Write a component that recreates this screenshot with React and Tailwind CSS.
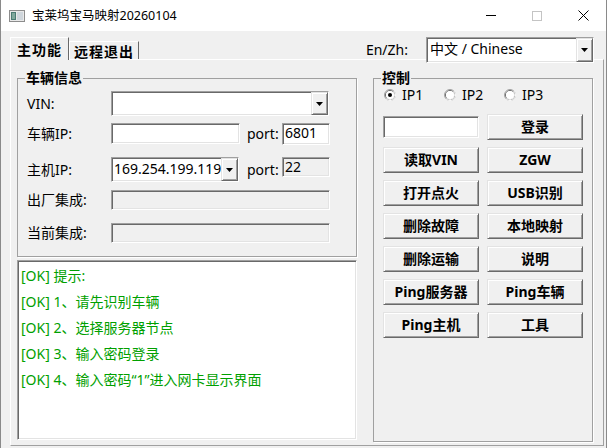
import React from "react";

const SUNKEN =
  "border border-t-[#a0a0a0] border-l-[#a0a0a0] border-r-white border-b-white shadow-[inset_1px_1px_0_#696969,inset_-1px_-1px_0_#e3e3e3]";
const RAISED =
  "border border-t-[#e3e3e3] border-l-[#e3e3e3] border-r-[#696969] border-b-[#696969] shadow-[inset_1px_1px_0_#ffffff,inset_-1px_-1px_0_#a0a0a0]";

function Arrow() {
  return (
    <svg width="7" height="4" viewBox="0 0 7 4">
      <path d="M0 0H7L3.5 4Z" fill="#000" />
    </svg>
  );
}

function DropBtn() {
  return (
    <div className={`${RAISED} bg-[#f0f0f0] w-[17px] shrink-0 flex items-center justify-center`}>
      <Arrow />
    </div>
  );
}

function Radio({ checked, label }) {
  return (
    <div className="flex items-center w-[60px]">
      <svg width="12" height="12" viewBox="0 0 12 12">
        <circle cx="6" cy="6" r="5.5" fill="none" stroke="#a0a0a0" />
        <path d="M9.89 2.11A5.5 5.5 0 0 1 2.11 9.89" fill="none" stroke="#ffffff" />
        <circle cx="6" cy="6" r="4.5" fill="none" stroke="#696969" />
        <path d="M9.18 2.82A4.5 4.5 0 0 1 2.82 9.18" fill="none" stroke="#e3e3e3" />
        <circle cx="6" cy="6" r="4" fill="#ffffff" />
        {checked && <circle cx="6" cy="6" r="2" fill="#000" />}
      </svg>
      <span className="ml-[6px] text-[14px] leading-[18px] text-black">{label}</span>
    </div>
  );
}

function Btn({ children }) {
  return (
    <div
      className={`${RAISED} bg-[#f0f0f0] h-[26px] flex items-center justify-center text-[14px] font-bold leading-[18px] text-black`}
    >
      {children}
    </div>
  );
}

const LOG = [
  "[OK] 提示:",
  "[OK] 1、请先识别车辆",
  "[OK] 2、选择服务器节点",
  "[OK] 3、输入密码登录",
  "[OK] 4、输入密码“1”进入网卡显示界面",
];

export default function App() {
  return (
    <div className="w-[607px] h-[448px] overflow-hidden bg-[#f0f0f0] border-x border-[#8a8a8a] flex flex-col font-['Noto_Sans','Noto_Sans_CJK_SC',sans-serif] text-black">
      {/* Title bar */}
      <div className="h-[31px] bg-white flex items-center shrink-0">
        <svg className="ml-[8px]" width="16" height="12" viewBox="0 0 16 12">
          <rect x="0.5" y="0.5" width="15" height="11" fill="#e9e9e9" stroke="#8c8c8c" />
          <rect x="2" y="2" width="5" height="8" fill="#4a7a72" />
          <rect x="3" y="3" width="3" height="6" fill="#7fa89c" />
          <rect x="8" y="2" width="6" height="8" fill="#cfd6dc" />
        </svg>
        <span className="ml-[7px] text-[12.5px] leading-[16px]">宝莱坞宝马映射20260104</span>
        <div className="ml-auto flex h-full">
          <div className="w-[46px] h-full flex items-center justify-center">
            <div className="w-[10px] h-[1px] bg-black" />
          </div>
          <div className="w-[46px] h-full flex items-center justify-center">
            <div className="w-[10px] h-[10px] border border-[#c4c4c4]" />
          </div>
          <div className="w-[46px] h-full flex items-center justify-center">
            <svg width="11" height="11" viewBox="0 0 11 11">
              <path d="M0.5 0.5L10.5 10.5M10.5 0.5L0.5 10.5" stroke="#000" strokeWidth="1" />
            </svg>
          </div>
        </div>
      </div>

      {/* Tab control */}
      <div className="ml-[9px] mr-[2px] mt-[6px] flex flex-col">
        <div className="h-[22px] flex items-end">
          <div className="relative z-10 h-[23px] w-[59px] -mb-[1px] bg-[#f0f0f0] border-t border-l border-white border-r border-r-[#696969] flex items-center justify-center text-[14px] font-bold tracking-[1px] leading-[18px] font-['Noto_Sans_CJK_SC',sans-serif]">
            主功能
          </div>
          <div className="h-[18px] w-[70px] border-t border-l border-white border-r border-r-[#696969] flex items-center justify-center text-[14px] font-bold tracking-[1px] leading-[18px] font-['Noto_Sans_CJK_SC',sans-serif]">
            远程退出
          </div>
          <div className="ml-auto mr-[10px] self-start h-[26px] flex items-center relative z-10">
            <span className="text-[14px] leading-[18px] mr-[18px]">En/Zh:</span>
            <div className={`${SUNKEN} bg-white w-[168px] h-[26px] flex`}>
              <span className="flex-1 pl-[3px] text-[14px] leading-[22px]">中文 / Chinese</span>
              <DropBtn />
            </div>
          </div>
        </div>

        {/* Panel */}
        <div className="h-[387px] border-t border-l border-white border-r border-b border-r-[#a0a0a0] border-b-[#a0a0a0] pt-[10px] pl-[6px] pr-[10px] flex gap-[16px]">
          {/* Left column */}
          <div className="w-[340px] flex flex-col">
            <fieldset className="h-[187px] border border-[#a0a0a0] shadow-[1px_1px_0_#ffffff]">
              <legend className="ml-[7px] px-[1px] text-[14px] font-bold leading-[16px]">车辆信息</legend>
              <div className="pl-[9px]">
                <div className="mt-[5px] h-[25px] flex items-center">
                  <span className="w-[84px] text-[14px] leading-[18px]">VIN:</span>
                  <div className={`${SUNKEN} bg-white w-[218px] h-[25px] flex`}>
                    <span className="flex-1" />
                    <DropBtn />
                  </div>
                </div>
                <div className="mt-[7px] h-[21px] flex items-center">
                  <span className="w-[84px] text-[14px] leading-[18px]">车辆IP:</span>
                  <div className={`${SUNKEN} bg-white w-[129px] h-[21px]`} />
                  <span className="ml-[7px] w-[35px] text-[14px] leading-[18px]">port:</span>
                  <div className={`${SUNKEN} bg-white w-[48px] h-[22px] pl-[2px] text-[14px] leading-[18px]`}>6801</div>
                </div>
                <div className="mt-[13px] h-[25px] flex items-center">
                  <span className="w-[84px] text-[14px] leading-[18px]">主机IP:</span>
                  <div className={`${SUNKEN} bg-white w-[128px] h-[25px] flex`}>
                    <span className="flex-1 pl-[2px] text-[14px] leading-[21px] overflow-hidden whitespace-nowrap">
                      169.254.199.119
                    </span>
                    <DropBtn />
                  </div>
                  <span className="ml-[8px] w-[35px] text-[14px] leading-[18px]">port:</span>
                  <div className={`${SUNKEN} bg-[#f0f0f0] w-[48px] h-[20px] self-start pl-[2px] text-[14px] leading-[17px]`}>22</div>
                </div>
                <div className="mt-[8px] h-[20px] flex items-center">
                  <span className="w-[84px] text-[14px] leading-[18px]">出厂集成:</span>
                  <div className={`${SUNKEN} bg-[#f0f0f0] w-[219px] h-[20px]`} />
                </div>
                <div className="mt-[13px] h-[20px] flex items-center">
                  <span className="w-[84px] text-[14px] leading-[18px]">当前集成:</span>
                  <div className={`${SUNKEN} bg-[#f0f0f0] w-[219px] h-[20px]`} />
                </div>
              </div>
            </fieldset>

            <div className={`${SUNKEN} bg-white mt-[3px] h-[180px] pt-[2px] pl-[3px]`}>
              {LOG.map((l, i) => (
                <div key={i} className="text-[14px] leading-[26px] text-[#00a000] whitespace-nowrap">
                  {l}
                </div>
              ))}
            </div>
          </div>

          {/* Right column */}
          <fieldset className="w-[220px] h-[372px] border border-[#a0a0a0] shadow-[1px_1px_0_#ffffff]">
            <legend className="ml-[7px] px-[1px] text-[14px] font-bold leading-[16px]">控制</legend>
            <div className="pl-[9px]">
              <div className="h-[18px] pl-[1px] flex items-center">
                <Radio checked label="IP1" />
                <Radio label="IP2" />
                <Radio label="IP3" />
              </div>
              <div className="mt-[10px] grid grid-cols-[96px_96px] gap-x-[8px] gap-y-[7px]">
                <div className="h-[26px] flex items-center">
                  <div className={`${SUNKEN} bg-white w-[96px] h-[22px]`} />
                </div>
                <Btn>登录</Btn>
                <Btn>读取VIN</Btn>
                <Btn>ZGW</Btn>
                <Btn>打开点火</Btn>
                <Btn>USB识别</Btn>
                <Btn>删除故障</Btn>
                <Btn>本地映射</Btn>
                <Btn>删除运输</Btn>
                <Btn>说明</Btn>
                <Btn>Ping服务器</Btn>
                <Btn>Ping车辆</Btn>
                <Btn>Ping主机</Btn>
                <Btn>工具</Btn>
              </div>
            </div>
          </fieldset>
        </div>
      </div>
    </div>
  );
}
